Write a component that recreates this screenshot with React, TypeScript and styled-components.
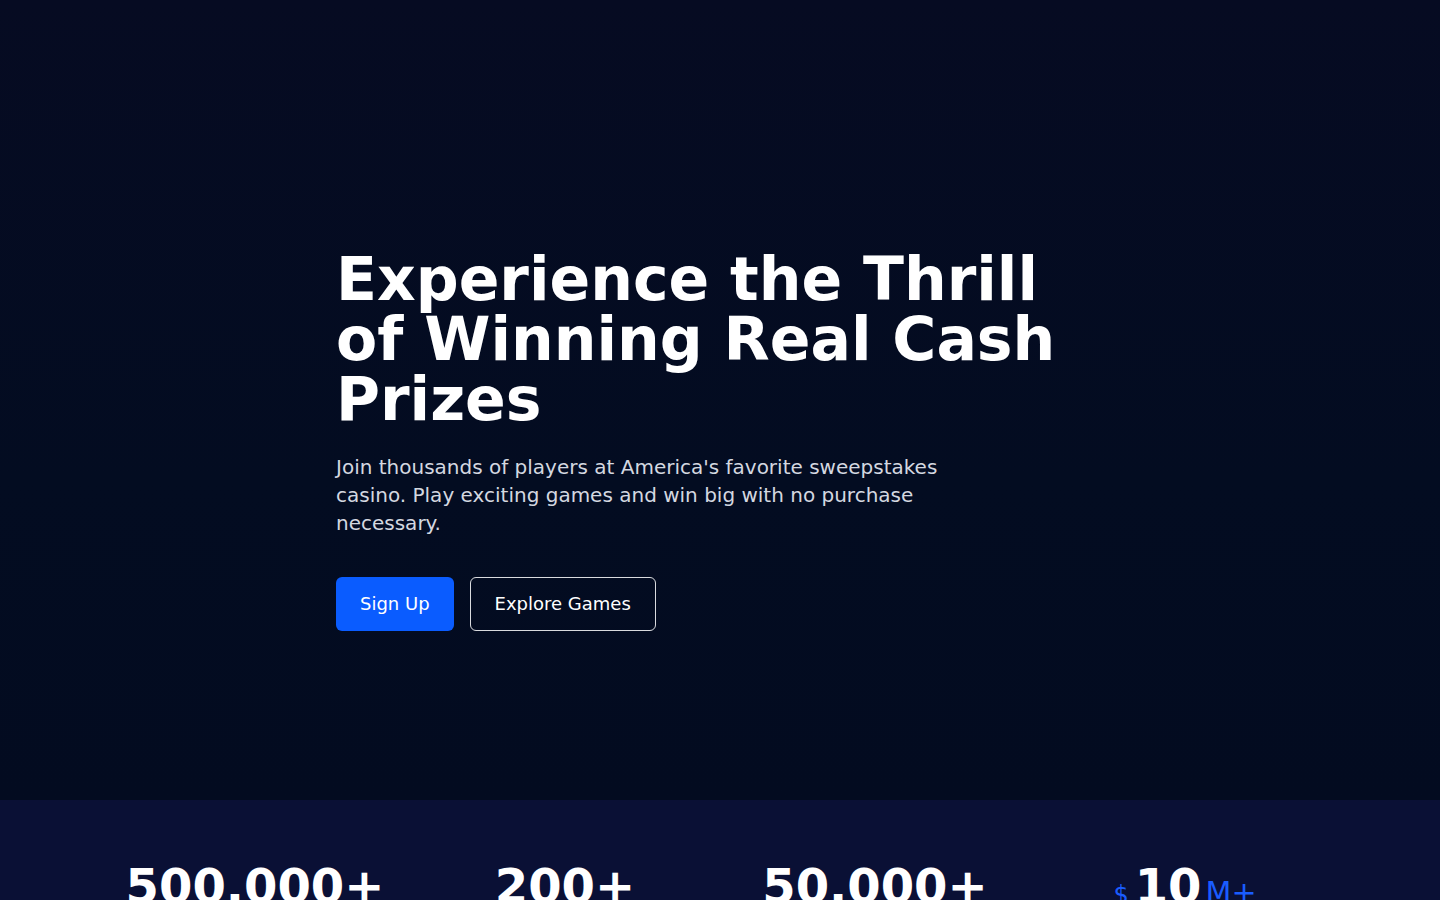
import React from "react";
import styled, { createGlobalStyle } from "styled-components";

const GlobalStyle = createGlobalStyle`
  * { box-sizing: border-box; }
  html, body {
    margin: 0;
    padding: 0;
    background: #040b20;
    font-family: "DejaVu Sans", "Noto Sans", sans-serif;
    color: #fff;
  }
`;

const Page = styled.div`
  min-height: 100vh;
  background: #040b20;
`;

const Hero = styled.section`
  height: 800px;
  padding-top: 80px;
  display: flex;
  align-items: center;
  justify-content: center;
  background: linear-gradient(180deg, #060b22 0%, #030c21 60%, #030b20 100%);
`;

const HeroInner = styled.div`
  width: 768px;
`;

const Title = styled.h1`
  margin: 0 0 24px;
  font-size: 60px;
  line-height: 60px;
  font-weight: 700;
  color: #ffffff;
`;

const Lead = styled.p`
  margin: 0 0 40px;
  max-width: 640px;
  font-size: 20px;
  line-height: 28px;
  color: #d4d8e0;
`;

const Actions = styled.div`
  display: flex;
  gap: 16px;
`;

const Button = styled.button<{ $variant?: "primary" | "outline" }>`
  font-family: inherit;
  font-size: 18px;
  line-height: 22px;
  padding: ${(p) => (p.$variant === "outline" ? "15px 24px" : "16px 24px")};
  border-radius: 6px;
  cursor: pointer;
  color: #ffffff;
  background: ${(p) => (p.$variant === "outline" ? "transparent" : "#0a5cff")};
  border: ${(p) =>
    p.$variant === "outline" ? "1px solid rgba(255,255,255,0.85)" : "none"};
`;

const Stats = styled.section`
  background: #0a1035;
  padding: 62px 0 64px;
`;

const StatsGrid = styled.div`
  width: 1240px;
  margin: 0 auto;
  display: grid;
  grid-template-columns: repeat(4, 1fr);
`;

const Stat = styled.div`
  text-align: center;
`;

const Number = styled.div`
  font-size: 48px;
  line-height: 48px;
  font-weight: 700;
  color: #ffffff;
  white-space: nowrap;
`;

const Affix = styled.span<{ $size: number; $side: "pre" | "post" }>`
  font-size: ${(p) => p.$size}px;
  font-weight: 400;
  color: #1a5cff;
  margin-right: ${(p) => (p.$side === "pre" ? "6px" : "0")};
  margin-left: ${(p) => (p.$side === "post" ? "4px" : "0")};
`;

const Label = styled.div`
  margin-top: 8px;
  font-size: 18px;
  color: #aab2c8;
`;

const stats = [
  { value: "500,000+", label: "Active Players" },
  { value: "200+", label: "Casino Games" },
  { value: "50,000+", label: "Daily Winners" },
];

export default function App() {
  return (
    <Page>
      <GlobalStyle />
      <Hero>
        <HeroInner>
          <Title>Experience the Thrill of Winning Real Cash Prizes</Title>
          <Lead>
            Join thousands of players at America's favorite sweepstakes casino.
            Play exciting games and win big with no purchase necessary.
          </Lead>
          <Actions>
            <Button>Sign Up</Button>
            <Button $variant="outline">Explore Games</Button>
          </Actions>
        </HeroInner>
      </Hero>
      <Stats>
        <StatsGrid>
          {stats.map((s) => (
            <Stat key={s.value}>
              <Number>{s.value}</Number>
              <Label>{s.label}</Label>
            </Stat>
          ))}
          <Stat>
            <Number>
              <Affix $size={24} $side="pre">
                $
              </Affix>
              10
              <Affix $size={30} $side="post">
                M+
              </Affix>
            </Number>
            <Label>Prizes Awarded</Label>
          </Stat>
        </StatsGrid>
      </Stats>
    </Page>
  );
}
